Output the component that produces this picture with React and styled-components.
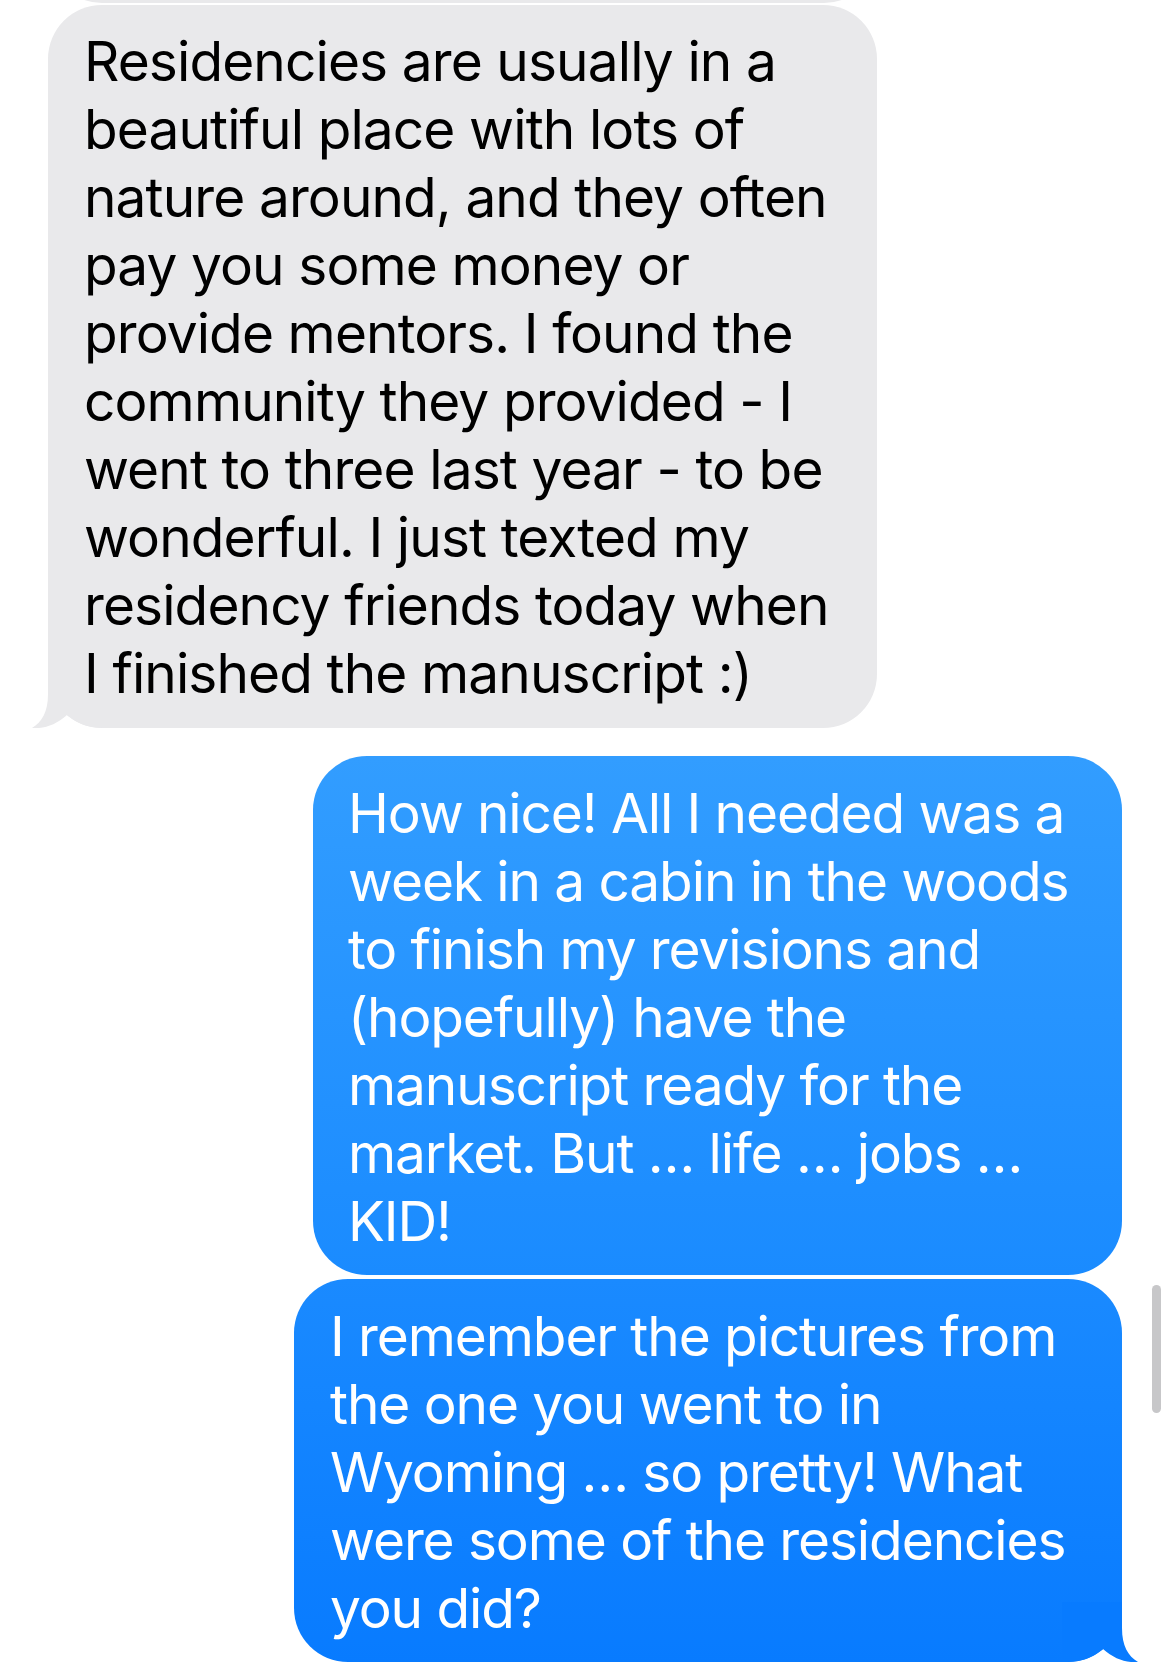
import React from 'react';
import styled, { createGlobalStyle } from 'styled-components';

const GlobalStyle = createGlobalStyle`
  html, body {
    margin: 0;
    padding: 0;
    background: #ffffff;
  }
  body {
    font-family: Inter, "Noto Sans", "Liberation Sans", sans-serif;
    -webkit-font-smoothing: antialiased;
  }
`;

const Screen = styled.div`
  position: relative;
  width: 1170px;
  height: 1666px;
  overflow: hidden;
  display: flex;
  flex-direction: column;
`;

const Row = styled.div`
  display: flex;
  justify-content: ${(p) => (p.$mine ? 'flex-end' : 'flex-start')};
  padding: ${(p) => (p.$mine ? '0 48px 0 0' : '0 0 0 48px')};
  margin-top: ${(p) => p.$gap || 0}px;
`;

const PrevBubble = styled.div`
  width: 830px;
  height: 120px;
  margin-top: -117px;
  margin-left: 48px;
  border-radius: 54px;
  background: #e9e9eb;
`;

const Bubble = styled.div`
  position: relative;
  box-sizing: border-box;
  width: ${(p) => p.$width}px;
  padding: ${(p) => p.$top}px 0 ${(p) => p.$bottom}px ${(p) => p.$indent}px;
  border-radius: 54px;
  background: ${(p) => p.$bg};
  color: ${(p) => (p.$mine ? '#ffffff' : '#000000')};
  font-size: 55px;
  line-height: 68px;
  letter-spacing: ${(p) => (p.$mine ? -1.1 : -0.9)}px;
`;

const Line = styled.span`
  position: relative;
  z-index: 1;
  display: block;
  white-space: nowrap;
`;

const Tail = styled.svg`
  position: absolute;
  bottom: 0;
  ${(p) => (p.$mine ? 'right: -16px; transform: scaleX(-1);' : 'left: -16px;')}
  width: 76px;
  height: 60px;
  display: block;
`;

const ScrollThumb = styled.div`
  position: absolute;
  left: 1152px;
  top: 1285px;
  width: 9px;
  height: 128px;
  border-radius: 5px;
  background: #c7c7c9;
`;

const BubbleTail = ({ color, mine }) => (
  <Tail $mine={mine} viewBox="-16 -60 76 60">
    <path
      d="M0 -60 L0 -34 C0 -16 -6 -6 -16 0 C-4 1 8 -3 19 -12.9 A54 54 0 0 0 54 0 L60 0 L60 -60 Z"
      fill={color}
    />
  </Tail>
);

const theirs = [
  'Residencies are usually in a',
  'beautiful place with lots of',
  'nature around, and they often',
  'pay you some money or',
  'provide mentors. I found the',
  'community they provided - I',
  'went to three last year - to be',
  'wonderful. I just texted my',
  'residency friends today when',
  'I finished the manuscript :)',
];

const firstReply = [
  'How nice! All I needed was a',
  'week in a cabin in the woods',
  'to finish my revisions and',
  '(hopefully) have the',
  'manuscript ready for the',
  'market. But \u2026 life \u2026 jobs \u2026',
  'KID!',
];

const secondReply = [
  'I remember the pictures from',
  'the one you went to in',
  'Wyoming \u2026 so pretty! What',
  'were some of the residencies',
  'you did?',
];

const App = () => (
  <Screen>
    <GlobalStyle />
    <PrevBubble />
    <Row $gap={2}>
      <Bubble $width={829} $indent={36} $top={22} $bottom={21} $bg="#e9e9eb">
        <BubbleTail color="#e9e9eb" />
        {theirs.map((t) => <Line key={t}>{t}</Line>)}
      </Bubble>
    </Row>
    <Row $mine $gap={28}>
      <Bubble
        $mine
        $width={809}
        $indent={35}
        $top={23}
        $bottom={20}
        $bg="linear-gradient(180deg, #329dff 0%, #1a8bff 100%)"
      >
        {firstReply.map((t) => <Line key={t}>{t}</Line>)}
      </Bubble>
    </Row>
    <Row $mine $gap={4}>
      <Bubble
        $mine
        $width={828}
        $indent={36}
        $top={23}
        $bottom={20}
        $bg="linear-gradient(180deg, #1a8aff 0%, #087bff 100%)"
      >
        <BubbleTail mine color="#087bff" />
        {secondReply.map((t) => <Line key={t}>{t}</Line>)}
      </Bubble>
    </Row>
    <ScrollThumb />
  </Screen>
);

export default App;
